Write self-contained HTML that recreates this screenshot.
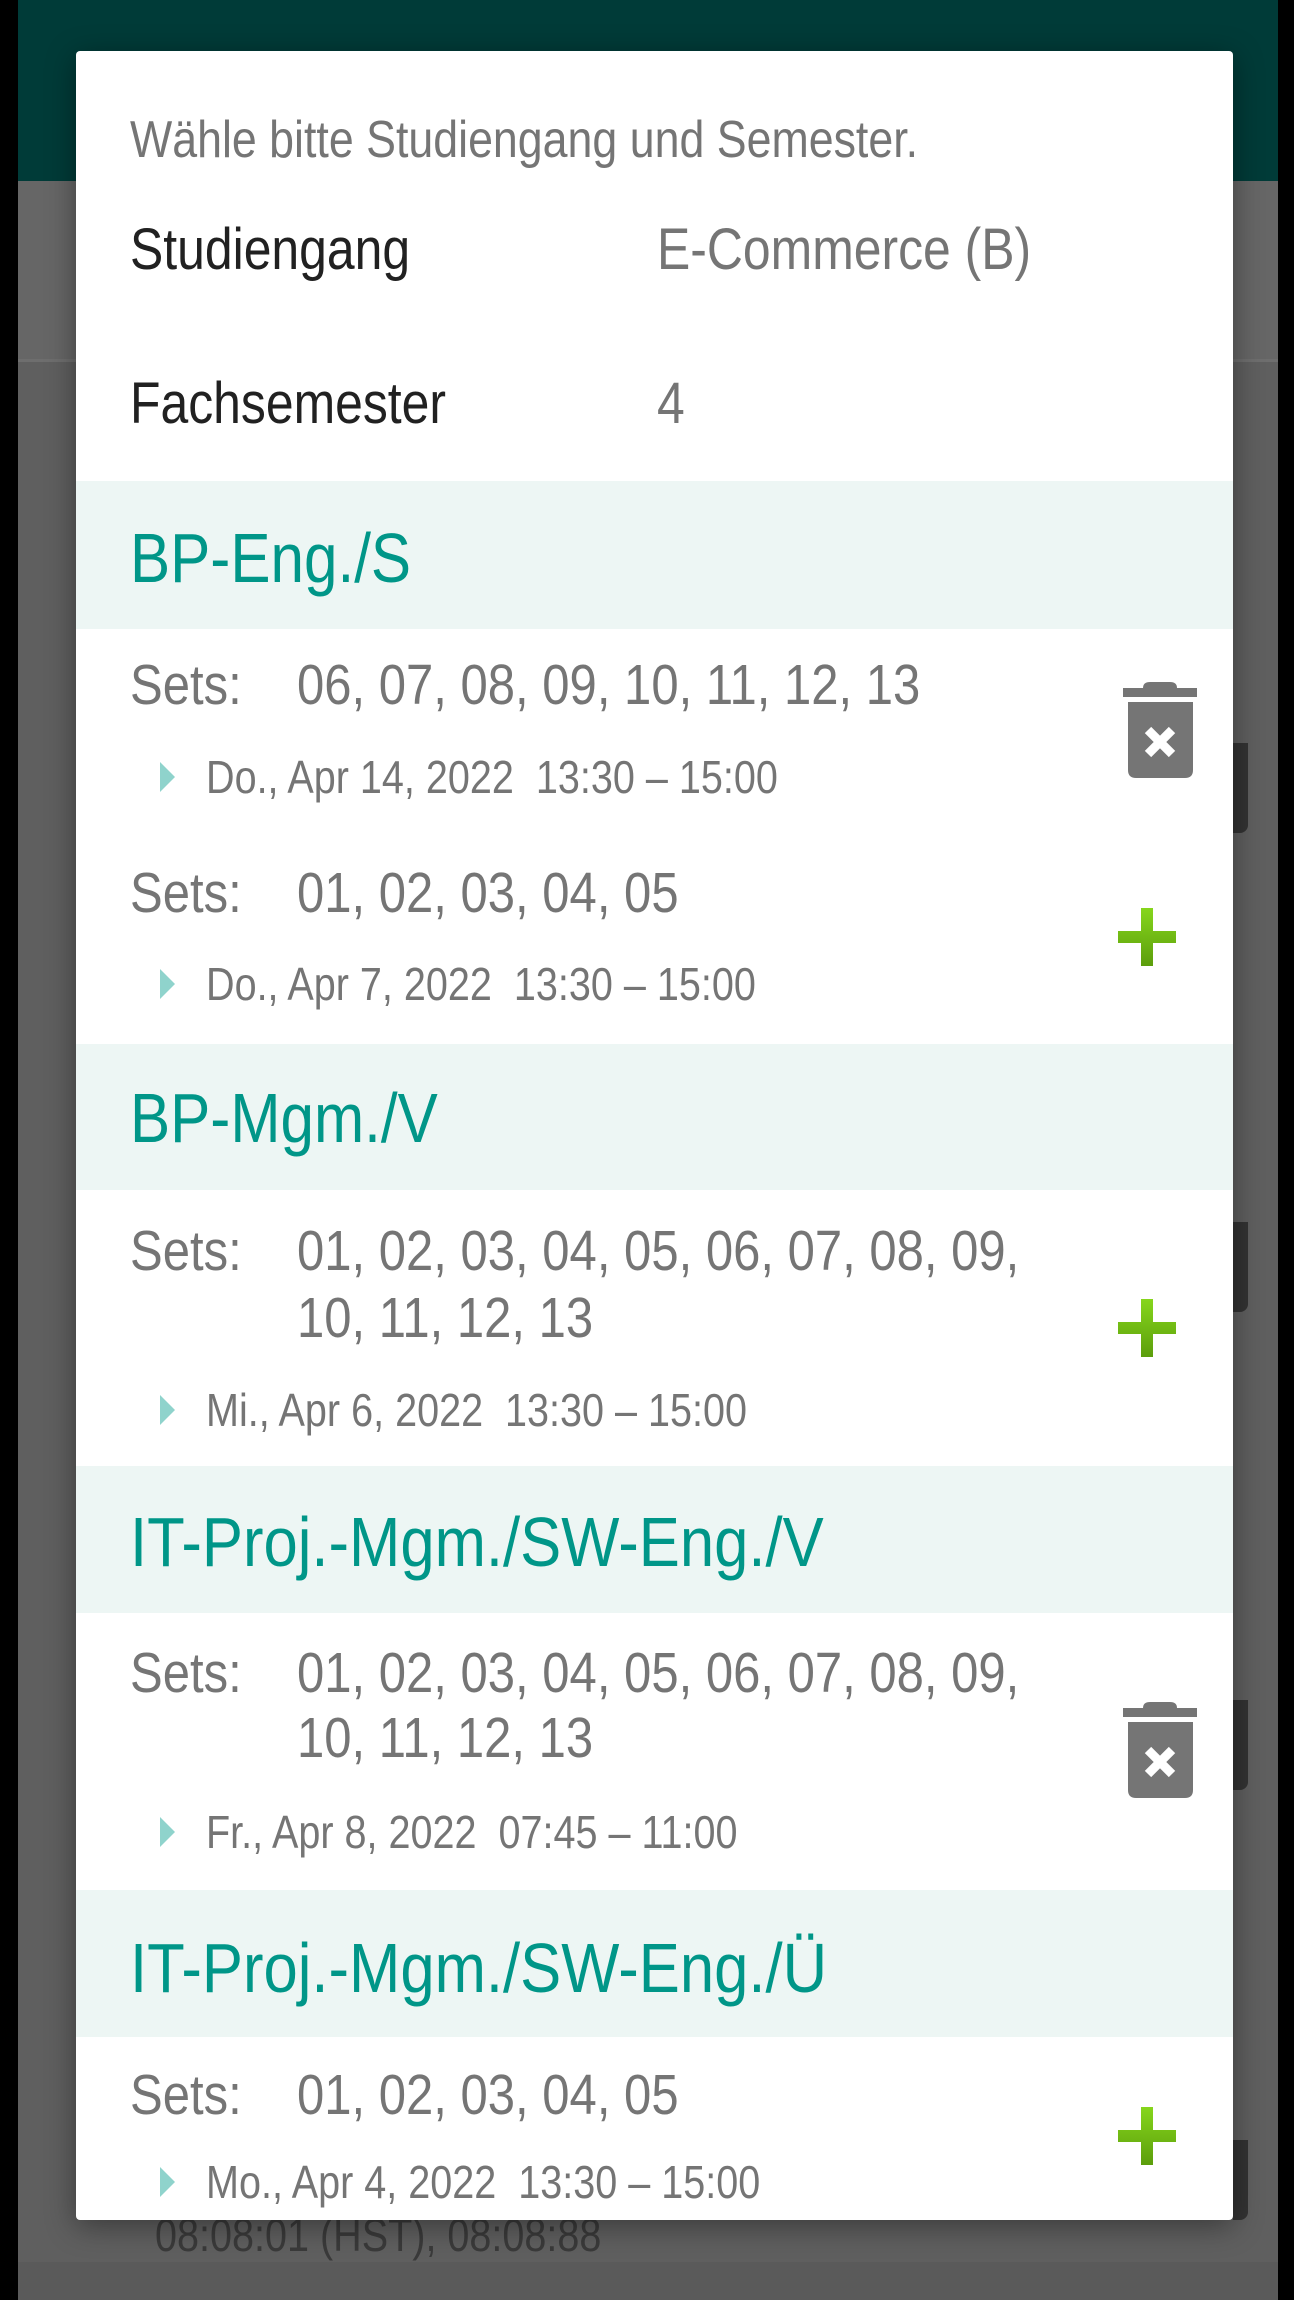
<!DOCTYPE html>
<html><head><meta charset="utf-8"><style>
*{margin:0;padding:0;box-sizing:border-box}
body{width:1294px;height:2300px;overflow:hidden;background:#5a5a5a;position:relative;font-family:"Liberation Sans",sans-serif}
.a{position:absolute;white-space:nowrap;line-height:1;transform:scaleX(.86);transform-origin:left top}
.i{font-size:52px;color:#757575}
.l{font-size:58px;color:#212121}
.v{font-size:58px;color:#757575}
.h{font-size:70px;color:#009688}
.s{font-size:57px;color:#757575}
.d{font-size:46px;color:#757575}
.hb{position:absolute;left:76px;width:1157px;background:#edf6f4}
.tri{position:absolute;width:0;height:0;border-top:15px solid transparent;border-bottom:15px solid transparent;border-left:15px solid #8fd3cc}
.bg{position:absolute}
</style></head><body>
<div class="bg" style="left:0;top:0;width:18px;height:2300px;background:#000"></div>
<div class="bg" style="left:1278px;top:0;width:16px;height:2300px;background:#000"></div>
<div class="bg" style="left:18px;top:0;width:1260px;height:181px;background:#003b38"></div>
<div class="bg" style="left:18px;top:181px;width:1260px;height:178px;background:#666"></div>
<div class="bg" style="left:18px;top:359px;width:1260px;height:3px;background:#6e6e6e"></div>
<div class="bg" style="left:18px;top:362px;width:1260px;height:1900px;background:#5f5f5f"></div>
<div class="bg" style="left:1233px;top:743px;width:15px;height:90px;background:#333;border-radius:0 0 8px 0"></div>
<div class="bg" style="left:1233px;top:1222px;width:15px;height:90px;background:#333;border-radius:0 0 8px 0"></div>
<div class="bg" style="left:1233px;top:1700px;width:15px;height:90px;background:#333;border-radius:0 0 8px 0"></div>
<div class="bg" style="left:1233px;top:2140px;width:15px;height:80px;background:#333;border-radius:0 0 8px 0"></div>
<div class="a" style="left:155px;top:2212px;font-size:46px;color:#3a3a3a">08:08:01 (HST), 08:08:88</div>

<div class="bg" style="left:76px;top:51px;width:1157px;height:2169px;background:#fff;border-radius:4px;box-shadow:0 6px 30px rgba(0,0,0,.4)"></div>

<div class="a i" style="left:130px;top:114px">Wähle bitte Studiengang und Semester.</div>
<div class="a l" style="left:130px;top:221px">Studiengang</div>
<div class="a v" style="left:657px;top:221px">E-Commerce (B)</div>
<div class="a l" style="left:130px;top:375px">Fachsemester</div>
<div class="a v" style="left:657px;top:375px">4</div>

<div class="hb" style="top:481px;height:148px"></div>
<div class="a h" style="left:130px;top:523px">BP-Eng./S</div>
<div class="a s" style="left:130px;top:657px">Sets:</div>
<div class="a s" style="left:297px;top:657px">06, 07, 08, 09, 10, 11, 12, 13</div>
<div class="tri" style="left:160px;top:762px"></div>
<div class="a d" style="left:206px;top:754px">Do., Apr 14, 2022&nbsp; 13:30 – 15:00</div>
<div class="a s" style="left:130px;top:865px">Sets:</div>
<div class="a s" style="left:297px;top:865px">01, 02, 03, 04, 05</div>
<div class="tri" style="left:160px;top:969px"></div>
<div class="a d" style="left:206px;top:961px">Do., Apr 7, 2022&nbsp; 13:30 – 15:00</div>

<div class="hb" style="top:1044px;height:146px"></div>
<div class="a h" style="left:130px;top:1083px">BP-Mgm./V</div>
<div class="a s" style="left:130px;top:1223px">Sets:</div>
<div class="a s" style="left:297px;top:1223px">01, 02, 03, 04, 05, 06, 07, 08, 09,</div>
<div class="a s" style="left:297px;top:1290px">10, 11, 12, 13</div>
<div class="tri" style="left:160px;top:1395px"></div>
<div class="a d" style="left:206px;top:1387px">Mi., Apr 6, 2022&nbsp; 13:30 – 15:00</div>

<div class="hb" style="top:1466px;height:147px"></div>
<div class="a h" style="left:130px;top:1507px;transform:scaleX(.88)">IT-Proj.-Mgm./SW-Eng./V</div>
<div class="a s" style="left:130px;top:1645px">Sets:</div>
<div class="a s" style="left:297px;top:1645px">01, 02, 03, 04, 05, 06, 07, 08, 09,</div>
<div class="a s" style="left:297px;top:1710px">10, 11, 12, 13</div>
<div class="tri" style="left:160px;top:1817px"></div>
<div class="a d" style="left:206px;top:1809px">Fr., Apr 8, 2022&nbsp; 07:45 – 11:00</div>

<div class="hb" style="top:1890px;height:147px"></div>
<div class="a h" style="left:130px;top:1933px;transform:scaleX(.88)">IT-Proj.-Mgm./SW-Eng./Ü</div>
<div class="a s" style="left:130px;top:2067px">Sets:</div>
<div class="a s" style="left:297px;top:2067px">01, 02, 03, 04, 05</div>
<div class="tri" style="left:160px;top:2167px"></div>
<div class="a d" style="left:206px;top:2159px">Mo., Apr 4, 2022&nbsp; 13:30 – 15:00</div>

<svg class="bg" style="left:1120px;top:680px" width="80" height="100" viewBox="0 0 80 100">
<path d="M23 8 Q23 2 30 2 H50 Q57 2 57 8 H77 V17 H3 V8 Z" fill="#757575"/>
<path d="M8 22 H73 V90 Q73 98 65 98 H16 Q8 98 8 90 Z" fill="#757575"/>
<path d="M28 50 L52 74 M52 50 L28 74" stroke="#fff" stroke-width="9"/>
</svg>
<svg class="bg" style="left:1120px;top:1700px" width="80" height="100" viewBox="0 0 80 100">
<path d="M23 8 Q23 2 30 2 H50 Q57 2 57 8 H77 V17 H3 V8 Z" fill="#757575"/>
<path d="M8 22 H73 V90 Q73 98 65 98 H16 Q8 98 8 90 Z" fill="#757575"/>
<path d="M28 50 L52 74 M52 50 L28 74" stroke="#fff" stroke-width="9"/>
</svg>
<svg class="bg" style="left:1118px;top:908px" width="58" height="58" viewBox="0 0 58 58"><defs><linearGradient id="g" x1="0" y1="0" x2="0" y2="1"><stop offset="0" stop-color="#86d61c"/><stop offset="1" stop-color="#5c9e0c"/></linearGradient></defs><path d="M23 0 H35 V23 H58 V35 H35 V58 H23 V35 H0 V23 H23 Z" fill="url(#g)"/></svg>
<svg class="bg" style="left:1118px;top:1299px" width="58" height="58" viewBox="0 0 58 58"><path d="M23 0 H35 V23 H58 V35 H35 V58 H23 V35 H0 V23 H23 Z" fill="url(#g)"/></svg>
<svg class="bg" style="left:1118px;top:2107px" width="58" height="58" viewBox="0 0 58 58"><path d="M23 0 H35 V23 H58 V35 H35 V58 H23 V35 H0 V23 H23 Z" fill="url(#g)"/></svg>
</body></html>
